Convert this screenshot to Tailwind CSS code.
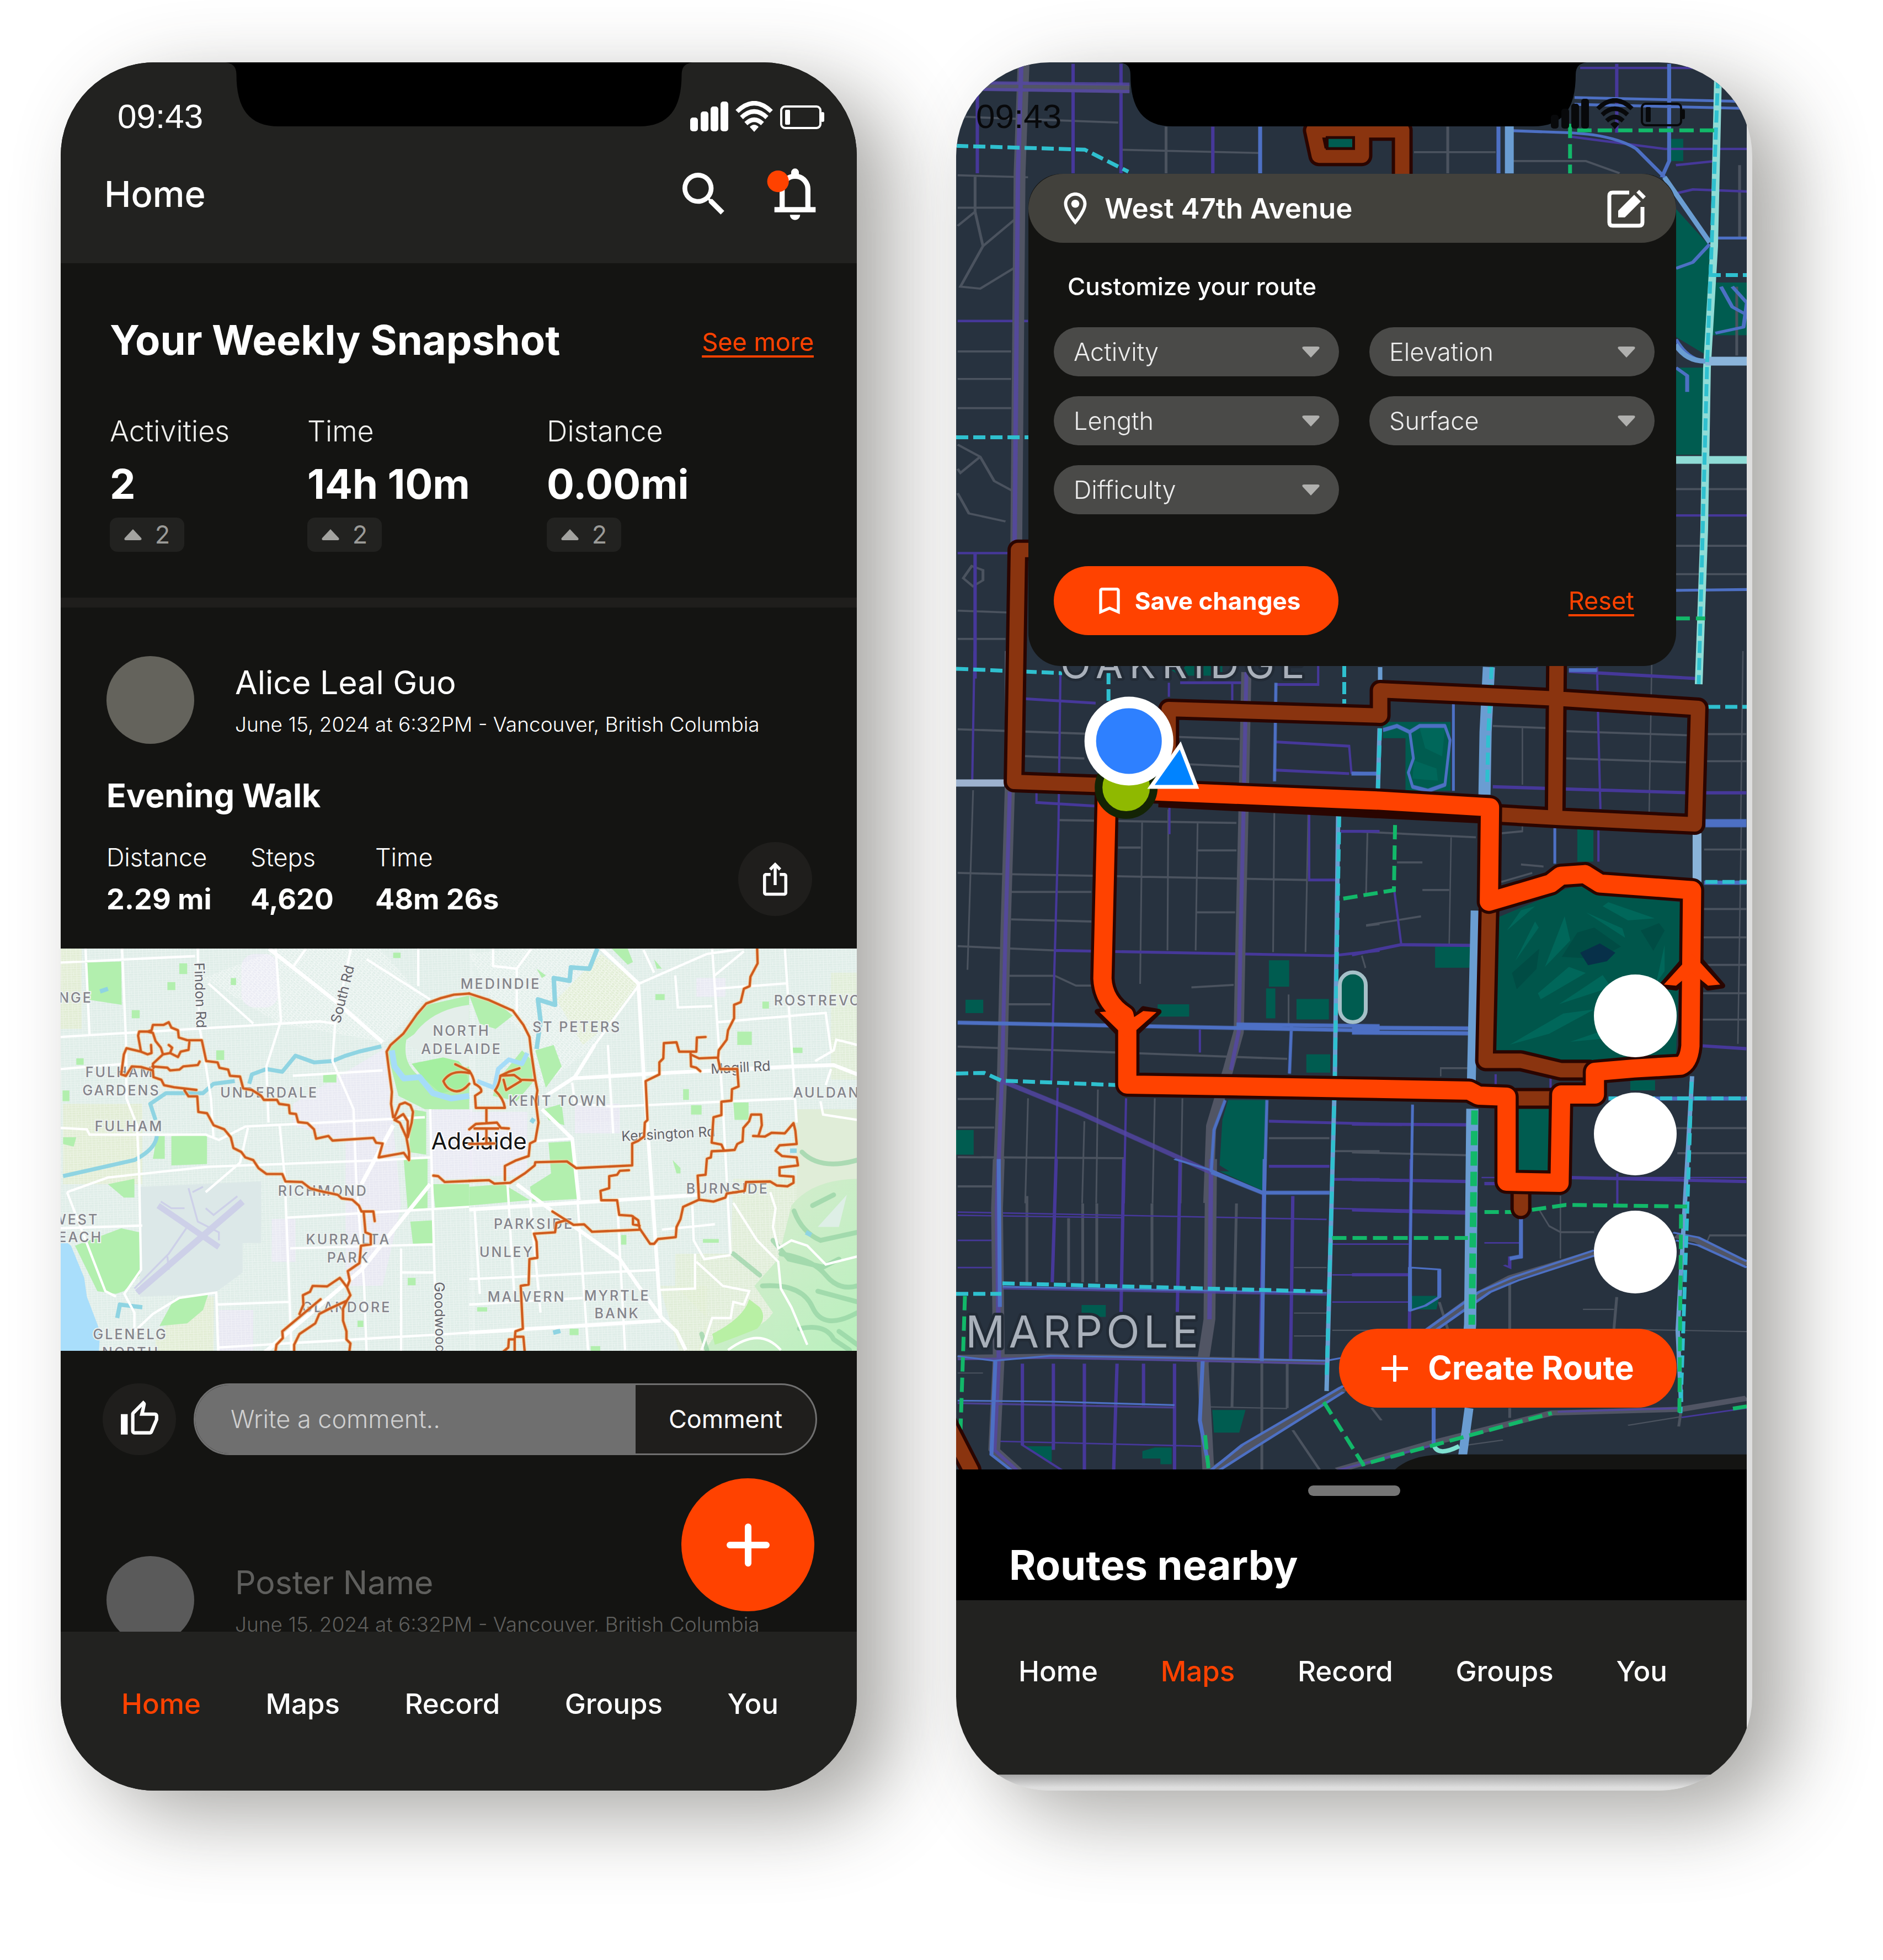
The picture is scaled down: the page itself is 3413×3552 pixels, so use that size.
<!DOCTYPE html>
<html lang="en">
<head>
<meta charset="utf-8">
<title>Activity tracker – Home and Maps</title>
<script src="https://cdn.jsdelivr.net/npm/@tailwindcss/browser@4"></script>
</head>
<body class="bg-white font-['Inter',sans-serif] text-white antialiased">
<svg class="absolute h-0 w-0" aria-hidden="true">
  <defs>
    <symbol id="status" viewBox="0 0 243 56">
      <g fill="currentColor">
        <rect x="0" y="30" width="14" height="25" rx="5"/><rect x="19" y="19" width="14" height="36" rx="5"/>
        <rect x="37" y="10" width="14" height="45" rx="5"/><rect x="55" y="1" width="14" height="54" rx="5"/>
        <path d="M116 56l-8-9q8-8 16 0z"/>
        <rect x="237" y="20" width="6" height="18" rx="3"/><rect x="172" y="16" width="9" height="27" rx="2"/>
      </g>
      <g fill="none" stroke="currentColor">
        <path stroke-width="8" d="M101 41q15-14 30 0M93 30q23-22 46 0M85 19q31-30 62 0"/>
        <rect x="165" y="10" width="71" height="39" rx="7" stroke-width="4"/>
      </g>
    </symbol>
    <symbol id="notch" viewBox="0 0 847 116">
      <path d="M0 0H847Q827 2 827 22C827 84 804 116 750 116H97C43 116 20 84 20 22Q20 2 0 0z" fill="#000"/>
    </symbol>
    <symbol id="up" viewBox="0 0 32 22"><path d="M16 1L31 17q2 4-3 4H4q-5 0-3-4z" fill="#a3a3a0"/></symbol>
    <symbol id="down" viewBox="0 0 32 22"><path d="M16 21L31 5q2-4-3-4H4q-5 0-3 4z" fill="#b0b0ae"/></symbol>
    <pattern id="blocks" width="36" height="26" patternUnits="userSpaceOnUse" patternTransform="rotate(-2)">
      <path d="M0 4H36M0 13H36M0 22H36M5 0V26M20 0V26M29 0V13" stroke="#fff" stroke-width="2" opacity=".42"/>
    </pattern>
    <pattern id="blocksTilt" width="30" height="26" patternUnits="userSpaceOnUse" patternTransform="rotate(38)">
      <path d="M0 4H30M0 13H30M0 22H30M5 0V26M20 0V26" stroke="#fff" stroke-width="2" opacity=".6"/>
    </pattern>
    <linearGradient id="hills" x1="0" y1="0" x2="1" y2="1"><stop offset="0" stop-color="#dcebd2"/><stop offset="1" stop-color="#b9f0bd"/></linearGradient>
    <path id="alternatives" d="M1890 997H1845L1838 1417L2006 1423M2118 1400V1285L2501 1297V1251L2820 1266L3077 1283L3071 1494L2820 1482L2715 1476M2821 1150L2818 1481M2698 1650L2692 1922H2756L2828 1939H2880M2748 1990H2812M2756 2160V2190M2380 237L2390 283H2468V238M2380 237H2541V330M1715 2575L1760 2663"/>
    <path id="planned" d="M2041 1432L2500 1451L2700 1463L2698 1634L2810 1601L2828 1587L2872 1584L2899 1601L3066 1613L3063 1895Q3060 1925 3045 1931L2960 1936L2890 1942V1983H2829L2826 2143L2730 2141V1987L2679 1985L2662 1976L2450 1972L2043 1965V1862L2038 1840Q2000 1815 1998 1773L2006 1435"/>
    <path id="track-west" d="M372 486L370 470L408 435L400 410L380 385L370 355L350 350L318 350L314 365L325 425L350 435L365 430L363 400M350 350L365 345L370 325L410 325L430 315L440 335L465 345L468 372L500 382L555 382L572 460L615 465L622 485L655 492L662 515L700 518L712 562L745 568L780 590L790 605L840 605L848 620L885 625L888 655L912 658L920 688L955 692L980 715L988 750L1035 740L1050 757L1205 747L1215 765L1240 768L1225 820L1320 803L1340 830L1340 800L1330 745L1305 690L1285 680L1318 658L1335 685L1335 745L1350 690L1355 650L1345 625L1325 615L1305 622L1285 670M325 425L270 412L260 435L250 510L268 515L290 480L325 482L370 495L372 520L402 530L412 550L450 558L535 568M490 570L505 592L538 592L542 650L575 655L600 700L640 715L665 745L675 785L705 800L720 820L750 830L770 860L800 882L860 882L872 910L935 912L965 935L1000 945L1070 960L1085 973L1125 978L1150 1000L1160 1022L1205 1022L1210 1058M1168 1022L1175 1100L1195 1108L1195 1145L1158 1150L1152 1215L1108 1245L1115 1280L1105 1305L1118 1335L1105 1355L1040 1385L1000 1405L985 1440L925 1480L905 1520V1560M1105 1305L1078 1270L1030 1302L975 1300L965 1322L938 1335L940 1370L925 1405M1005 1350L860 1470L862 1495L838 1520L832 1560M1105 1355L1090 1385L1090 1430L1103 1470L1103 1500L1118 1515L1112 1560M368 480L425 485L435 495L470 492L485 480L540 475L547 462M408 435L435 430L465 445L475 425L505 418L508 390M435 430L443 410L430 400M1568 208L1510 212L1460 225L1405 245L1370 285L1318 358L1270 400L1255 425L1265 500L1275 575L1272 620L1280 670M1515 472L1568 497M1568 505Q1530 496 1500 508Q1480 518 1470 535Q1480 560 1500 568Q1535 585 1568 545M1432 888L1450 890L1475 912L1568 908"/>
    <path id="track-east" d="M0 208L75 232L165 272L205 325L228 370L235 430L250 530L258 570L252 610L262 690L250 758L230 768L225 815L175 832L135 852L135 905M0 908L75 905L95 918L155 915L210 880L248 850L250 838L370 835L405 860L617 850L617 768L640 758L662 742L665 690L675 680L668 535L720 510L720 465L735 450L737 393L785 390L795 425L860 425L862 372L895 370M838 425L840 480L860 485L875 498M838 435L870 450L942 447M1090 30L1092 95L1065 145L1062 180L1040 190L1028 240L1003 250L1003 300L980 345L975 380L945 420L942 450L950 490L1015 490L1020 555L995 565L993 608L955 612L955 662L925 670L918 765L955 772L965 795L1005 792L1015 770L1035 760L1038 710L1060 685L1068 660L1105 660L1108 700L1095 740M1075 740L1120 742L1145 728L1195 730L1228 692L1235 720L1240 770L1175 775L1160 795L1185 815L1240 820L1245 850L1175 858L1175 888L1228 892L1228 915L1205 928L1165 925L1140 910L1048 912L1043 945L975 955L970 970L925 985L870 978L865 888L895 885L900 825L915 820L918 797L965 795M870 978L810 1005L800 1050L785 1080L782 1118L715 1125L700 1143L685 1143L645 1085L640 1055L615 1038L568 1035L560 980L500 980L497 945L530 935L530 890L560 885L570 870L605 868M620 1040V1070L645 1075M645 1090L465 1098L435 1070L395 1072L315 1022M365 1055L330 1065L325 1100L245 1105L255 1135L258 1195L228 1200L225 1295L195 1300L203 1460L175 1470L172 1500L150 1500L148 1530L130 1545M175 1490L205 1490L210 1545M172 1500V1545M0 497Q15 515 20 545Q50 560 45 575L22 590L25 635L135 635Q130 600 98 570Q115 545 118 515L150 500L190 487M118 515L170 512L195 530L250 532M195 535L140 568L130 530M65 635V690M0 715L25 695L105 690L120 710L150 712M0 770L95 768M20 712L110 712M65 712V770"/>
  </defs>
</svg>

<div class="grid grid-cols-2 items-start gap-[180px] pt-[113px] pr-[237px] pb-[306px] pl-[110px]">

  <!-- Home screen -->
  <section class="relative min-w-0 overflow-hidden rounded-[170px] bg-[#141412] shadow-[65px_45px_145px_rgba(60,57,50,0.44)]">
    <svg class="absolute top-0 left-1/2 h-[116px] w-[847px] -translate-x-1/2"><use href="#notch"/></svg>
    <header class="bg-[#222220] pt-[65px] pb-[75px]">
      <div class="flex h-[66px] items-center justify-between pr-[59px] pl-[103px]">
        <span class="font-['Liberation_Sans',sans-serif] text-[62px] leading-[66px]">09:43</span>
        <svg class="h-[56px] w-[243px]"><use href="#status"/></svg>
      </div>
      <div class="mt-[58px] flex h-[100px] items-center justify-between pr-[56px] pl-[79px]">
        <h1 class="text-[65px] leading-[80px] font-medium">Home</h1>
        <div class="flex items-center gap-[57px]">
          <button aria-label="Search"><svg class="block h-[104px] w-[104px]" viewBox="0 0 24 24" fill="#fff"><path d="M15.5 14h-.79l-.28-.27A6.47 6.47 0 0 0 16 9.500A6.500 6.500 0 1 0 9.500 16c1.610 0 3.090-.59 4.230-1.570l.27.28v.79l5 4.990L20.490 19l-4.990-5zm-6 0C7.010 14 5 11.990 5 9.500S7.010 5 9.500 5 14 7.010 14 9.500 11.990 14 9.500 14z"/></svg></button>
          <button aria-label="Notifications"><svg class="block h-[112px] w-[112px]" viewBox="0 0 24 24" fill="#fff"><path d="M4 19v-2h2v-7q0-2.075 1.250-3.687T10.500 4.200v-.7q0-.625.438-1.062T12 2t1.063.438T13.500 3.500v.7q2 .5 3.250 2.113T18 10v7h2v2H4Zm8 3q-.825 0-1.412-.587T10 20h4q0 .825-.587 1.413T12 22ZM8 17h8v-7q0-1.650-1.175-2.825T12 6T9.175 7.175T8 10v7Z"/><circle cx="5.400" cy="7" r="4.200" fill="#ff4200"/></svg></button>
        </div>
      </div>
    </header>

    <section class="border-b-[18px] border-[#1f1e1c] pt-[95px] pr-[78px] pb-[83px] pl-[89px]">
      <div class="flex items-center justify-between">
        <h2 class="text-[74px] leading-[88px] font-bold">Your Weekly Snapshot</h2>
        <a href="#" class="pt-[8px] text-[45px] leading-[56px] text-[#ff4200] underline decoration-4 underline-offset-[8px]">See more</a>
      </div>
      <div class="mt-[90px] grid grid-cols-[358px_434px_auto] justify-start">
        <div>
          <p class="text-[52px] leading-[64px] font-light text-[#f0f0ee]">Activities</p>
          <p class="mt-[19px] text-[74px] leading-[88px] font-bold">2</p>
          <p class="mt-[17px] flex h-[62px] w-[135px] items-center justify-center gap-[24px] rounded-[14px] bg-[#222220] text-[45px] text-[#9b9b98]"><svg class="h-[22px] w-[32px]"><use href="#up"/></svg>2</p>
        </div>
        <div>
          <p class="text-[52px] leading-[64px] font-light text-[#f0f0ee]">Time</p>
          <p class="mt-[19px] text-[74px] leading-[88px] font-bold">14h 10m</p>
          <p class="mt-[17px] flex h-[62px] w-[135px] items-center justify-center gap-[24px] rounded-[14px] bg-[#222220] text-[45px] text-[#9b9b98]"><svg class="h-[22px] w-[32px]"><use href="#up"/></svg>2</p>
        </div>
        <div>
          <p class="text-[52px] leading-[64px] font-light text-[#f0f0ee]">Distance</p>
          <p class="mt-[19px] text-[74px] leading-[88px] font-bold">0.00mi</p>
          <p class="mt-[17px] flex h-[62px] w-[135px] items-center justify-center gap-[24px] rounded-[14px] bg-[#222220] text-[45px] text-[#9b9b98]"><svg class="h-[22px] w-[32px]"><use href="#up"/></svg>2</p>
        </div>
      </div>
    </section>

    <article>
      <div class="pt-[88px] pr-[81px] pb-[59px] pl-[83px]">
        <div class="flex gap-[74px]">
          <div class="h-[159px] w-[159px] shrink-0 rounded-full bg-[#64635c]"></div>
          <div class="flex flex-col gap-[16px] pt-[12px]">
            <h3 class="text-[59px] leading-[72px]">Alice Leal Guo</h3>
            <p class="text-[37px] leading-[48px] font-light whitespace-nowrap">June 15, 2024 at 6:32PM - Vancouver, British Columbia</p>
          </div>
        </div>
        <h3 class="mt-[58px] text-[59px] leading-[72px] font-bold">Evening Walk</h3>
        <div class="mt-[48px] flex items-center justify-between">
          <div class="grid grid-cols-[261px_226px_auto]">
            <div><p class="text-[45px] leading-[56px] font-light">Distance</p><p class="mt-[18px] text-[52px] leading-[60px] font-bold">2.29 mi</p></div>
            <div><p class="text-[45px] leading-[56px] font-light">Steps</p><p class="mt-[18px] text-[52px] leading-[60px] font-bold">4,620</p></div>
            <div><p class="text-[45px] leading-[56px] font-light">Time</p><p class="mt-[18px] text-[52px] leading-[60px] font-bold">48m 26s</p></div>
          </div>
          <button aria-label="Share" class="flex h-[134px] w-[134px] items-center justify-center rounded-full bg-[#1f1e1c]"><svg class="h-[66px] w-[66px]" viewBox="0 0 24 24" fill="#fff"><path d="M16 5l-1.420 1.420-1.590-1.590V16h-1.980V4.830L9.420 6.420 8 5l4-4 4 4zm4 5v11c0 1.100-.9 2-2 2H6c-1.110 0-2-.9-2-2V10c0-1.110.89-2 2-2h3v2H6v11h12V10h-3V8h3c1.100 0 2 .89 2 2z"/></svg></button>
        </div>
      </div>

      <svg class="block h-[729px] w-full" viewBox="110 1719 1442 729" preserveAspectRatio="xMidYMid slice" role="img" aria-label="Map of Adelaide with the recorded walk">
        <rect x="100" y="1700" width="1470" height="760" fill="#dfede8"/>
        <!-- western half: ground, parks, water, main roads -->
        <g transform="translate(100 1700) scale(.4783 .4847)">
          <g fill="#ebe8f5" opacity=".8"><rect x="705" y="60" width="140" height="200" rx="50"/><path d="M900 620L1270 400L1280 700L1310 1000L1240 1300H1100V760L900 700z"/><rect x="1420" y="640" width="160" height="260"/><rect x="620" y="1390" width="130" height="160"/><rect x="820" y="1050" width="90" height="160"/></g>
          <g fill="#e2ecd0" opacity=".8"><rect x="20" y="40" width="80" height="300"/><rect x="30" y="620" width="300" height="300"/><path d="M380 1480L560 1340H600V1560H380z"/></g>
          <rect x="0" y="0" width="1590" height="1590" fill="url(#blocks)"/>
          <path d="M560 150L850 40H1230L1400 230L1250 390L850 320z" fill="url(#blocksTilt)"/>
          <path d="M320 930L780 910V1140H710V1250L600 1330L320 1340z" fill="#dce8e8"/>
          <g fill="#b2efae"><path d="M118 92L250 88L252 250L120 230z"/><path d="M440 740L575 735V845L440 850z"/><path d="M385 740H415V825H370z"/><path d="M75 1150L250 1085L320 1100V1260L260 1320L230 1330L160 1320z"/><path d="M395 1450L450 1350L580 1330L560 1390L500 1440z"/><path d="M200 920L300 900V970H260z"/><path d="M1320 830L1410 820V1010L1335 1015z"/><path d="M1430 920H1568V1010L1440 1015z"/><path d="M1345 1060L1430 1055L1433 1140L1355 1145z"/><path d="M1255 420L1320 350L1410 250L1568 215V330L1480 300Q1400 330 1330 380Q1310 480 1400 530L1568 480V640L1400 640L1300 590z"/><path d="M1350 640L1405 650V810L1340 800z"/><rect x="470" y="95" width="30" height="40"/><rect x="425" y="165" width="30" height="30"/><rect x="290" y="270" width="30" height="30"/><rect x="610" y="420" width="30" height="36"/><rect x="80" y="450" width="28" height="24"/><rect x="28" y="570" width="26" height="40"/><rect x="1015" y="510" width="50" height="30"/><rect x="1335" y="1270" width="30" height="28"/><rect x="1145" y="1430" width="22" height="24"/><rect x="665" y="150" width="20" height="26"/><rect x="1280" y="55" width="28" height="20"/><path d="M30 745H80L70 780L30 770z"/></g>
          <path d="M1350 470L1500 440Q1560 470 1568 560L1460 580L1390 520z" fill="#a4efa0"/>
          <path d="M1335 400Q1400 270 1568 250V470L1400 430z" fill="#e4eeea"/>
          <path d="M20 1120L60 1150L110 1270L120 1340L170 1470L165 1560H20z" fill="#a9defb"/>
          <g fill="none" stroke="#8fd4e2" stroke-linejoin="round"><path d="M30 890L300 830Q380 790 385 740M380 680L360 620L420 580L560 580L600 545L680 535M735 545L745 510L800 490L860 500L910 440L980 465L1050 460L1100 440L1150 425L1235 405" stroke-width="15"/><path d="M1275 420L1285 480L1320 525L1380 520L1430 580L1500 600L1568 590" stroke="#a5dcf8" stroke-width="22"/><path d="M235 1420L245 1370L330 1380M170 200L200 190" stroke-width="16"/></g>
          <g fill="none" stroke="#fff" stroke-width="9"><path d="M20 92L530 68M253 40L268 380L270 600L310 700L318 880L325 1240L262 1330L300 1400V1470L370 1405L470 1345L610 1325L618 1560M115 40L130 360M20 370L1000 312L1060 320M20 490L270 470M540 40L545 320L590 600L600 750M835 40L855 310L800 480L808 690M20 710L120 715L130 735L570 735L620 755L720 705L1400 670M850 700L870 900L895 1540M45 950L200 895L580 855L1240 830L1420 820M570 950L700 840L730 710M580 170L750 320M20 1085L330 1075M610 1370L885 1360M880 1045L1568 1005M1420 640L1430 1010L1445 1560M1060 320L1050 460L1130 640L1140 900L1170 1300L1180 1560M900 515L1240 495M1310 1160V1560M620 1530L1568 1475M1120 40L1060 320M1375 40V180M45 950L190 1320L230 1340M1310 1250H1440M890 1160L1430 1145M950 40L900 110M1180 80L1420 230"/><path d="M810 40L1060 235L1240 390M1280 700L1160 920M1420 920L1160 1240L780 1560" stroke-width="15"/></g>
          <g fill="none" stroke="#cdd0e8"><path d="M310 1325L710 985" stroke-width="24"/><path d="M390 1000L620 1155" stroke-width="22"/><path d="M570 1010L600 1035L690 965M505 935L540 1060L620 1100V1130M425 1190L430 1240M500 1080L430 1180L300 1310M520 950L560 930M400 985L440 1010L490 1010" stroke-width="7"/></g>
        </g>
        <!-- eastern half -->
        <g transform="translate(850 1700) scale(.4783 .4847)">
          <g fill="#ebe8f5" opacity=".8"><rect x="400" y="620" width="170" height="110"/><rect x="0" y="650" width="220" height="240"/><rect x="860" y="150" width="110" height="70"/></g>
          <g fill="#dfecd2"><path d="M330 230L500 60L640 170L520 330L430 400z"/><path d="M1240 640H1480V1560H860L900 1420L780 1300V1180L990 1180L1000 900H1240z" opacity=".7"/><path d="M720 1300H900V1560H800z" opacity=".7"/><rect x="1370" y="130" width="110" height="400" opacity=".7"/></g>
          <rect x="0" y="0" width="1240" height="1590" fill="url(#blocks)"/><rect x="1240" y="0" width="250" height="640" fill="url(#blocks)"/>
          <path d="M0 60L180 40H480L640 180L480 400L270 560L230 380L100 260z" fill="url(#blocksTilt)"/>
          <path d="M1220 1000Q1300 900 1480 900V1560H880L940 1470Q1100 1480 1150 1400L1080 1300L1170 1200z" fill="url(#hills)"/>
          <g fill="none" stroke="#8fcfa0" stroke-width="18" opacity=".65" stroke-linecap="round"><path d="M1260 800Q1330 870 1470 830M1230 1020Q1260 1100 1330 1130L1470 1100M1180 1180Q1300 1200 1350 1260T1470 1300M1110 1300Q1260 1290 1300 1380T1470 1400M1250 1460Q1350 1440 1380 1500L1440 1540M1000 1180L1100 1260M1300 1000L1380 960M880 1480L900 1540M1150 1130L1210 1200L1340 1230L1400 1200M1320 1320L1470 1360M1400 1470L1470 1520"/></g>
          <path d="M920 1480Q1040 1420 1060 1350L1100 1380Q1130 1420 1090 1460Q990 1500 930 1520z" fill="#b8f0a4"/>
          <path d="M1320 1080L1430 960L1400 1080z" fill="#deefe6"/>
          <g fill="#b2efae"><path d="M0 215L110 245L165 290L100 340L40 320z"/><path d="M100 540L200 420L240 460V540L180 610L90 590z"/><path d="M250 420L320 400L350 480L290 560z"/><path d="M280 640L350 620L360 700L300 680z"/><path d="M300 765L395 760L410 975L240 985L230 930L310 880z"/><path d="M0 930L130 920L230 980L0 1000z"/><path d="M540 40H600L620 90L600 100z"/><path d="M1000 615H1058V680H1005z"/><path d="M1015 350H1070V400H1015z"/><path d="M840 625H880V660H840z"/><path d="M1225 410H1262V430H1225z"/><rect x="705" y="210" width="35" height="22"/><rect x="1110" y="238" width="25" height="26"/><rect x="810" y="565" width="22" height="40"/><path d="M770 830L800 860V880H785z"/><rect x="380" y="1460" width="34" height="24"/><rect x="30" y="1380" width="38" height="16"/><rect x="460" y="1525" width="36" height="20"/><path d="M255 115L290 140L275 150z"/><path d="M700 80L730 115L710 115z"/><rect x="885" y="1125" width="60" height="14"/><rect x="575" y="1110" width="20" height="36"/></g>
          <g fill="none" stroke="#8fd4e2" stroke-width="17" stroke-linejoin="round"><path d="M485 40L455 115L385 110L380 160L320 150L325 250L260 230L270 310L255 415"/><path d="M220 430L200 470L150 455L110 490L95 560L30 535" stroke="#a5dcf8"/><path d="M1215 795H1240M1275 1100L1295 1110M318 1475L345 1468M235 690L245 675" /></g>
          <g fill="none" stroke="#fff" stroke-width="9"><path d="M90 40V105L180 115L180 280M180 115L235 40M645 170L900 60L1040 40M640 180L475 400M920 40L960 620L990 1180M930 190L1200 170M1195 40L1240 690M940 315L1350 280L1370 420M660 45L700 130M1040 50L930 140M525 400L545 730M390 540L400 620L545 630L1230 600M0 1275L720 1240M855 1180V1310L720 1315M20 1010L40 1330M145 920L170 1330M230 980L270 1400M410 980L450 1540M560 980L590 1540M0 1370L430 1345M845 1000L850 1130L890 1200L990 1185M240 760L390 750M730 1090L930 1070M860 1210L960 1300L1060 1320L1040 1370L1000 1360L990 1420L920 1420L880 1540M1140 950L1160 1010L1150 1080L1170 1160L1220 1130L1280 1150L1350 1220L1470 1190M1000 990L1090 1130L1170 1210L1180 1310L1220 1380L1280 1520M980 1540Q1100 1450 1180 1540M1330 610L1340 660L1470 680M1310 460L1380 420L1390 380L1470 400M1370 490L1350 550M780 140L790 260L920 255"/><path d="M500 40L640 170L660 500L700 1060L725 1420M390 525L640 510L1230 480L1380 475L1470 510M275 600L400 520L475 400M275 640L390 750L415 980M0 1015L870 960M180 920L300 1010L570 1200L640 1300L730 1420L785 1470L820 1540M0 1475L725 1430" stroke-width="14"/></g>
        </g>
        <!-- place names -->
        <g font-family="Inter, sans-serif" font-size="25" font-weight="500" letter-spacing="3" fill="#84848b" stroke="#eef3f2" stroke-width="4" paint-order="stroke" text-anchor="middle">
          <text x="137" y="1817">NGE</text><text x="217" y="1952">FULHAM</text><text x="220" y="1985">GARDENS</text><text x="488" y="1989">UNDERDALE</text><text x="234" y="2050">FULHAM</text><text x="585" y="2167">RICHMOND</text><text x="137" y="2219">WEST</text><text x="136" y="2251">BEACH</text><text x="631" y="2255">KURRALTA</text><text x="631" y="2288">PARK</text><text x="628" y="2378">GLANDORE</text><text x="236" y="2427">GLENELG</text><text x="237" y="2460">NORTH</text><text x="836" y="1877">NORTH</text><text x="836" y="1910">ADELAIDE</text><text x="907" y="1792">MEDINDIE</text><text x="1045" y="1870">ST PETERS</text><text x="1491" y="1822">ROSTREVOR</text><text x="1508" y="1989">AULDANA</text><text x="1011" y="2004">KENT TOWN</text><text x="1318" y="2163">BURNSIDE</text><text x="967" y="2227">PARKSIDE</text><text x="918" y="2278">UNLEY</text><text x="954" y="2359">MALVERN</text><text x="1118" y="2357">MYRTLE</text><text x="1118" y="2389">BANK</text>
        </g>
        <g font-family="Inter, sans-serif" font-size="25" fill="#63636a" stroke="#eef3f2" stroke-width="4" paint-order="stroke">
          <text transform="translate(352 1745) rotate(88)">Findon Rd</text><text transform="translate(616 1856) rotate(-76)">South Rd</text><text transform="translate(787 2323) rotate(89)">Goodwood Rd</text><text transform="translate(1288 1946) rotate(-3)">Magill Rd</text><text transform="translate(1126 2068) rotate(-3)">Kensington Rd</text>
        </g>
        <text x="781" y="2083" font-family="Inter, sans-serif" font-size="42" fill="#141414" stroke="#fff" stroke-width="4" paint-order="stroke">Adelaide</text>
        <!-- recorded track -->
        <g fill="none" stroke-linejoin="round" stroke-linecap="round">
          <g stroke="#f8dcae" stroke-width="15" opacity=".7"><use href="#track-west" transform="translate(100 1700) scale(.4783 .4847)"/><use href="#track-east" transform="translate(850 1700) scale(.4783 .4847)"/></g>
          <g stroke="#cf5a1c" stroke-width="9"><use href="#track-west" transform="translate(100 1700) scale(.4783 .4847)"/><use href="#track-east" transform="translate(850 1700) scale(.4783 .4847)"/></g>
        </g>
      </svg>

      <form class="mt-[59px] flex h-[130px] gap-[32px] pr-[72px] pl-[76px]">
        <button type="button" aria-label="Like" class="flex w-[133px] shrink-0 items-center justify-center rounded-full bg-[#1f1e1c]"><svg class="h-[74px] w-[74px]" viewBox="0 0 24 24" fill="#fff"><path d="M9 21h9c.83 0 1.540-.5 1.840-1.220l3.020-7.050c.09-.23.14-.47.14-.73v-2c0-1.100-.9-2-2-2h-6.310l.95-4.570.03-.32c0-.41-.17-.79-.44-1.060L14.170 1 7.580 7.590C7.220 7.950 7 8.450 7 9v10c0 1.100.9 2 2 2zM9 9l4.340-4.340L12 10h9v2l-3 7H9V9zM1 9h4v12H1z"/></svg></button>
        <div class="flex min-w-0 flex-1 overflow-hidden rounded-full border-3 border-[#707070] bg-[#1f1e1c]">
          <input type="text" aria-label="Write a comment" placeholder="Write a comment.." class="min-w-0 flex-1 bg-[#6f6f6f] pl-[64px] text-[45px] font-light outline-none placeholder:text-[#cfcfcf]">
          <button type="button" class="w-[326px] text-[45px]">Comment</button>
        </div>
      </form>
    </article>

    <article class="relative h-[320px] overflow-hidden pt-[183px] pl-[83px]">
      <div class="flex gap-[74px]">
        <div class="h-[159px] w-[159px] shrink-0 rounded-full bg-[#5a5a5a]"></div>
        <div class="flex flex-col gap-[16px] pt-[12px]">
          <h3 class="text-[59px] leading-[72px] text-[#5f5f5d]">Poster Name</h3>
          <p class="text-[37px] leading-[48px] font-light whitespace-nowrap text-[#5f5f5d]">June 15, 2024 at 6:32PM - Vancouver, British Columbia</p>
        </div>
      </div>
      <button aria-label="New activity" class="absolute top-[42px] right-[77px] flex h-[241px] w-[241px] items-center justify-center rounded-full bg-[#ff4200]"><svg class="h-[78px] w-[78px]" viewBox="0 0 78 78"><path d="M39 6V72M6 39H72" stroke="#fff" stroke-width="12" stroke-linecap="round"/></svg></button>
    </article>

    <nav class="flex h-[288px] justify-between bg-[#222220] pt-[99px] pr-[142px] pl-[110px] text-[51px] leading-[64px] font-medium">
      <a href="#" class="text-[#ff4200]">Home</a><a href="#">Maps</a><a href="#">Record</a><a href="#">Groups</a><a href="#">You</a>
    </nav>
  </section>

  <!-- Maps screen -->
  <section class="relative min-w-0 overflow-hidden rounded-[170px] bg-[#dedede] pr-[10px] shadow-[65px_45px_145px_rgba(60,57,50,0.44)]">
    <div class="relative h-[2550px] overflow-hidden">
      <svg class="absolute inset-0 h-full w-full" viewBox="1733 113 1432 2550" preserveAspectRatio="xMidYMid slice" role="img" aria-label="Map of Vancouver with the planned route">
        <rect x="1700" y="80" width="1500" height="2620" fill="#27323f"/>
        <!-- parks -->
        <g fill="#005c50">
          <g transform="translate(1700 80) scale(1.0204 .7334)"><path d="M1305 400L1370 500L1380 590H1436V720H1365V770L1305 720z"/><rect x="1305" y="800" width="58" height="215"/><rect x="1298" y="235" width="25" height="55"/></g>
          <g transform="translate(1700 1180) scale(.5102 .6378)"><rect x="98" y="990" width="63" height="38"/><rect x="780" y="1003" width="112" height="35"/><rect x="1175" y="878" width="72" height="75"/><rect x="1165" y="958" width="33" height="85"/><rect x="1273" y="988" width="115" height="58"/><rect x="1308" y="1145" width="85" height="52"/><rect x="60" y="1360" width="67" height="70"/><path d="M1030 1275H1165L1158 1530L1080 1500L1000 1460L1010 1330z"/><path d="M780 30H1010V70H860z"/></g>
          <g transform="translate(2450 1180) scale(.5102 .7334)"><path d="M110 175H350V345H190V215H110z"/><rect x="800" y="435" width="57" height="85"/><rect x="295" y="730" width="127" height="52"/><rect x="590" y="1130" width="110" height="155"/><rect x="988" y="1060" width="88" height="25"/>
            <path d="M510 660L750 590L820 575L870 600L1170 620L1150 1010L740 1020L600 990L500 1000z" fill="#00564b"/>
            <g fill="#00675a"><path d="M550 690L650 630L600 640zM580 765L650 668L663 683zM685 780L755 655L775 715zM660 845L770 780L830 795L670 860zM735 872L890 800L920 830zM560 972L750 895L860 885L700 945zM890 630L910 620L1075 660L980 665zM830 645L960 685L970 708zM775 965L900 935L1000 950zM1080 820L1110 725V790z"/><path d="M240 190H330L320 260L260 240zM220 270L300 290L305 320L215 315z"/></g>
            <g fill="#004c44"><path d="M745 755L800 695L860 683L955 730L870 760zM568 795L665 735L655 785L585 835zM1025 690L1090 672L1110 690L1070 740z"/></g><path d="M810 745L880 722L935 745L905 766L838 776z" fill="#073049"/></g>
          <g transform="translate(1700 2100) scale(1.0204 .4464)"><path d="M500 50H578V130z"/><path d="M255 592H298V640H255z"/><path d="M487 1018H546L535 1110H490z"/><path d="M155 1165H202V1230z"/><path d="M363 1185L385 1170H415V1238H395V1215H363z"/><path d="M838 555H890L885 610H838z"/></g>
        </g>
        <!-- minor streets -->
        <g fill="none" stroke="#4b535f" stroke-width="5">
          <path transform="translate(1700 80) scale(1.0204 .7334)" d="M35 325L160 330M35 405H140M66 325V415L80 500L140 430M35 450L66 415M80 500L40 600L75 605L140 550M35 760H130M35 828H130M35 900H130M35 990L75 1020L100 1080L140 1110M75 1020L40 1060L35 1050M35 1110L55 1160L120 1180M35 180L320 195M325 262L570 270M405 205V320M905 205V320M845 268H990M1020 290H1150L1210 320M1310 1100H1436M1310 1240H1436M1310 1310H1436M1423 300V480M1418 600V770M45 1320L60 1290L80 1300V1325L62 1340zM35 1400L130 1405M35 1470H120"/>
          <path transform="translate(1700 1180) scale(.5102 .6378)" stroke-width="6" d="M70 222L1070 250M300 298L520 305M850 320L1070 328M70 630L220 633L1310 650M260 684H545M260 762L545 768M640 558H720M430 480L1060 488M920 566H1060M915 742H1055M70 838L415 850M250 922H415L490 950H550M900 955L1050 948M250 1003H400M70 1123L1240 1158M70 1272H200M70 1353H200M70 1437L660 1440M70 1520H200M1175 1383H1390M1410 1420H1568M125 395L105 905M725 485L718 945M818 450L815 850M922 488L915 850M1195 400L1190 855M1315 460L1305 855M320 1270L310 1568M520 1335L512 1568M568 1245L562 1568M770 1270L762 1568M868 1270L862 1568M1245 975V1060M1525 510L1520 690M1520 780L1568 775M1505 865L1518 900"/>
          <path transform="translate(2450 1180) scale(.5102 .7334)" d="M0 445L440 460M500 185L690 190M760 198L1195 208M760 265L1195 275M1260 205H1400M1260 272H1400M605 190V330M1065 0L1055 400M1388 0L1380 430M55 450L50 600M352 460L345 725M160 522H250M250 590H345M50 677L245 655M1250 490H1400M1240 637H1400M1240 707H1400M1245 775H1400M1245 845H1400M1245 910H1400M1382 430L1370 970M0 1238L415 1245M1100 1178H1400M1155 1240H1400M315 1050V1030H420M740 1345V1500M600 527L680 532M530 570L640 548M530 450L605 445V430M665 1380L700 1420L740 1435H860M1260 1460L1270 1443H1400"/>
          <path transform="translate(1700 2100) scale(1.0204 .4464)" d="M158 150V500M257 180V500M282 180V500M232 240V500M380 180V500M530 180L522 1010M575 830V1262M620 830V1010M470 1005L620 1012M632 440H690M632 625H690M632 718H690M700 695H840M1205 560L1200 690L1436 700M1145 610H1200M630 1100L678 1262M35 868H80M1225 1080L1320 1045M925 1165L1003 1140M770 1010L787 1060M890 580L905 690M1015 500V690M1015 1010V1050M1320 1010L1315 1085"/>
        </g>
        <!-- quiet roads -->
        <g fill="none" stroke="#46389a" stroke-width="6">
          <path transform="translate(1700 80) scale(1.0204 .7334)" d="M70 90V320M240 50V320M325 50V320M35 685H160M35 1258H125M488 205V320M1140 60H1436M1205 50V220M1310 1165H1436M1310 300L1380 290M1310 370L1340 360L1436 365M1125 230L1290 260H1436M66 1260V1568"/>
          <path transform="translate(1700 1180) scale(.5102 .6378)" stroke-width="8" d="M130 0L122 365M435 60L428 500L410 1000L403 1220M300 135L560 148M415 850L1400 865L1568 850M668 1270L660 1568M425 1240L415 1568M1318 460V650H1410M820 90V130M822 430V520M1200 258L1460 270L1468 345L1568 350M1200 338L1460 348M1175 1335L1568 1343M1175 1463H1390M1400 1500H1568M1045 90V140M1200 95H1350V0M350 400V430L560 440M860 90H1090M930 1075V1140M1430 512H1568"/>
          <path transform="translate(2450 1180) scale(.5102 .7334)" stroke-width="8" d="M0 1168L415 1170M0 1305L415 1310M0 1380L415 1388M0 1540H200M770 50L1225 68M870 40L875 200L882 390M500 335L1195 350M1255 350H1400M150 590L175 725L440 727M0 750L175 725M1245 975L1400 982M770 1300L1400 1310M470 1315H520M510 1045V1075M705 1055V1085M942 1290V1370M360 130V345M875 440V520"/>
          <path transform="translate(1700 2100) scale(1.0204 .4464)" d="M35 215L690 245M35 228L330 238M210 0L203 500M330 0L325 620M430 0L425 620M578 140L572 820M630 150L626 820M700 80L760 88M700 200L940 212M700 345H840M700 470H835M700 580H835M840 0L837 690M35 330H100M35 440H100M110 1145L470 1165M150 830V1160L220 1262M205 830V1180M260 830V1262M318 830L312 1262M420 830V1262M365 830V1000M965 75H1436M970 340H1035M1015 395V440L1005 430M1320 1048L1436 1010"/>
        </g>
        <!-- arterials -->
        <g fill="none" stroke="#515564" stroke-width="21" stroke-linejoin="round">
          <path transform="translate(1700 80) scale(1.0204 .7334)" d="M35 104L340 112M152 50L145 320L137 1568"/>
          <path transform="translate(1700 1180) scale(.5102 .6378)" stroke-width="36" d="M255 0V400L240 800L228 1200L210 1568M1095 60L1085 450L1075 800L1068 1080L1030 1190L970 1350L960 1568"/>
          <path transform="translate(1700 2100) scale(1.0204 .4464)" d="M108 0L105 200L108 800L100 1180L140 1262M485 0L482 650L470 830L480 1262M35 805L200 800L400 808L690 825M490 1262L560 1150L720 930M870 700L960 550L1020 480L1165 380M1310 310L1350 330L1436 430M710 1262L880 1150L1090 1030L1320 1015L1436 970"/>
        </g>
        <g fill="none" stroke="#5546a8" stroke-width="8" stroke-linejoin="round" opacity=".8">
          <path transform="translate(1700 80) scale(1.0204 .7334)" d="M35 96L340 100M148 50L142 320L134 1568M35 112L340 118"/>
          <path transform="translate(1700 1180) scale(.5102 .6378)" stroke-width="14" d="M255 400L240 800L228 1200L210 1568M1095 60L1085 450L1075 800L1068 1080L1040 1190M225 1220L500 1310L970 1480"/>
          <path transform="translate(1700 2100) scale(1.0204 .4464)" d="M108 0L105 200L108 800L100 1180L140 1262M485 0L482 650M35 812L200 806L690 830M115 525L690 550M35 990L420 1008M710 1262L880 1160M1100 1025L1320 1010"/>
        </g>
        <g fill="none" stroke="#4d70c4" stroke-width="7" stroke-linejoin="round">
          <path transform="translate(1700 80) scale(1.0204 .7334)" d="M572 205V320M995 205V320M1130 133L1436 143M1130 150L1436 160M1298 50V290L1285 330M1120 220Q1200 225 1240 260L1290 330L1370 490M1020 215L1120 220M1380 480H1436M1370 495L1340 540L1310 555M1390 600L1410 650L1436 670M1380 715L1430 700L1436 640L1410 600M1310 800L1330 820V860M1310 730Q1330 780 1365 785M1310 1350L1436 1348"/>
          <path transform="translate(1700 1180) scale(.5102 .6378)" stroke-width="11" d="M1200 90L1195 370M70 1055L1568 1078M1060 1060L1568 1065M1255 1065L1248 1200M970 1480L1150 1538H1390M1168 1275L1158 1568M970 1480L980 1360L1020 1275M1468 348H1568"/>
          <path transform="translate(2450 1180) scale(.5102 .7334)" stroke-width="10" d="M720 435V525M0 930L430 932M0 942L430 944M1255 420H1400M1255 430H1400M1250 572H1400M215 1120L205 1568M600 1400L598 1495L560 1500M910 1105H1400M770 47H870M360 130V345M205 200L240 185H330L348 220L330 330L270 345L215 335L200 300L218 265zM110 195L160 185L205 200"/>
          <path transform="translate(1700 2100) scale(1.0204 .4464)" d="M420 0L485 45L578 135M580 0L575 820M35 980L200 984L420 998M115 518L690 543M838 440L890 448V560L865 595L838 615zM35 800L100 818L200 798L690 818L720 805M485 1262L540 1160L720 920M500 1262L570 1160L720 945M862 700L960 540L1020 480L1165 370M880 700L980 540L1030 492L1165 392M1305 298L1350 318L1436 415M1310 330L1350 350L1436 440M108 0L110 600M102 820L95 1200L130 1262M470 820L465 1060L480 1240M880 1010V1160M1035 240V400H1015"/>
        </g>
        <!-- popular corridors -->
        <g fill="none" stroke="#6a9dd2" stroke-linejoin="round">
          <path stroke-width="22" d="M2698 1209L2692 1327L2690 1440M2668 2009L2664 2400L2662 2420"/>
          <path stroke-width="16" d="M2673 1650L2666 1970M2735 225V315M2662 2551L2650 2640"/>
          <path stroke-width="14" stroke="#8fdcd6" d="M3113 139L3106 447L3093 667L3088 960L3078 1240M3036 834H3165"/>
          <path stroke-width="16" stroke="#8ab4da" d="M3075 1510V1600M3090 655H3165"/>
          <path stroke-width="9" d="M3016 322L3098 440M3036 625Q3055 655 3090 655"/>
          <path stroke-width="8" d="M2501 1209V1260M2500 1320L2497 1430M3066 1950L3040 2410L3046 2540M2425 1477L2419 1950L2413 2180L2404 2520"/>
          <path stroke-width="13" stroke="#9db2cf" d="M1733 1419H1820"/>
          <path stroke-width="8" stroke="#7fe0d0" d="M2598 2617Q2604 2640 2644 2620"/>
        </g>
        <g fill="none" stroke="#2fc0cf" stroke-width="7" stroke-dasharray="22 9">
          <path d="M2703 1209L2697 1327L2695 1420M3113 139L3093 667L3078 1240M3096 499H3165M1733 265L1966 272L2045 312M1733 793H1865M1733 1212L1925 1220M2009 1218V1270M2436 1205V1275M2501 1320L2497 1430M2427 1477L2419 1950L2413 2180L2404 2500M1733 1945L1784 1944L1815 1958L2027 1966M3095 1281H3165M3090 1598H3165M2915 1990H3165M3065 1960L3045 2560M1817 2325L2404 2340M1733 2344H1815"/>
        </g>
        <g fill="none" stroke="#12b869" stroke-width="7" stroke-dasharray="26 11">
          <path d="M2858 237H3110M2845 225V315M2528 1495L2526 1613L2430 1629M3036 1121H3090M2690 2196H2740M2776 2192L2838 2183L3057 2186M2414 2243H2660M2399 2540L2470 2653L2812 2560M1749 2348L1741 2590M3046 2200L3043 2560M2184 2600L2190 2660M3140 2552L3165 2548"/>
          <path stroke-width="12" d="M2672 2012L2667 2400"/>
        </g>
        <rect x="2428" y="1762" width="47" height="90" rx="23" fill="#005c50" stroke="#a5c0c8" stroke-width="7"/>
        <!-- districts -->
        <g font-family="Inter, sans-serif" fill="#a9b0ba" stroke="#222b36" stroke-width="10" stroke-linejoin="round" paint-order="stroke">
          <text x="1750" y="2441" font-size="79" letter-spacing="7">MARPOLE</text><text x="1922" y="1229" font-size="72" letter-spacing="11">OAKRIDGE</text>
        </g>
        <g fill="none" stroke-linejoin="round" stroke-linecap="round">
          <use href="#alternatives" stroke="#2a0500" stroke-width="38"/>
          <use href="#alternatives" stroke="#8a340f" stroke-width="26"/>
        </g>
        <rect x="2405" y="250" width="48" height="20" fill="#005c50" stroke="#2a0500" stroke-width="5"/>
        <!-- planned route -->
        <path d="M2100 1446L2700 1476" stroke="#2a0500" stroke-width="34"/>
        <path d="M1989 1833L2016 1828L2042 1860L2072 1828L2100 1833L2042 1888zM3011 1786L3037 1790L3066 1760L3095 1790L3121 1786L3066 1722z" fill="#ff4200" stroke="#2a0500" stroke-width="10" stroke-linejoin="round"/>
        <g fill="none" stroke-linejoin="round">
          <use href="#planned" stroke="#2a0500" stroke-width="44"/>
          <use href="#planned" stroke="#ff4200" stroke-width="33"/>
        </g>
        <path d="M1993 1834L2016 1832L2042 1852L2072 1832L2096 1834L2042 1882zM3015 1784L3037 1786L3066 1762L3095 1786L3117 1784L3066 1728z" fill="#ff4200"/>
        <circle cx="2041" cy="1427" r="50" fill="#8fb900" stroke="#142405" stroke-width="14"/>
        <path d="M2086 1426L2139 1351L2168 1426z" fill="#0083ff" stroke="#fff" stroke-width="7"/>
        <circle cx="2046" cy="1343" r="70" fill="#2e80ff" stroke="#fff" stroke-width="21"/>
        <path d="M2525 2665Q2555 2635 2620 2635H3170V2665z" fill="#141412"/>
      </svg>

      <svg class="absolute top-0 left-[296px] h-[116px] w-[847px]"><use href="#notch"/></svg>
      <div class="relative flex h-[202px] items-start justify-between pt-[65px] pr-[112px] pl-[36px] text-[#08090b]">
        <span class="font-['Liberation_Sans',sans-serif] text-[62px] leading-[66px]">09:43</span>
        <svg class="h-[56px] w-[243px]"><use href="#status"/></svg>
      </div>

      <form class="relative mr-[128px] ml-[131px] h-[892px] rounded-[60px] bg-[#141412]">
        <div class="flex h-[125px] items-center rounded-full bg-[#42413c] pr-[53px] pl-[50px]">
          <svg class="h-[70px] w-[70px]" viewBox="0 0 24 24" fill="#fff"><path d="M12 2C8.130 2 5 5.130 5 9c0 5.250 7 13 7 13s7-7.750 7-13c0-3.870-3.130-7-7-7zM7 9c0-2.760 2.240-5 5-5s5 2.240 5 5c0 2.880-2.880 7.190-5 9.880C9.920 16.210 7 11.850 7 9z"/><circle cx="12" cy="9" r="2.500"/></svg>
          <input type="text" aria-label="Street" value="West 47th Avenue" class="ml-[18px] min-w-0 flex-1 bg-transparent text-[51px] leading-[64px] font-semibold outline-none">
          <button type="button" aria-label="Edit route"><svg class="block h-[74px] w-[74px]" viewBox="0 0 74 74" fill="none" stroke="#fff" stroke-width="7"><path d="M42 8H12Q6 8 6 14V62Q6 68 12 68H60Q66 68 66 62V34"/><path d="M22 53V41L51 12L63 24L34 53z" fill="#fff" stroke="none"/><path d="M55 8L60 3L72 15L67 20z" fill="#fff" stroke="none"/></svg></button>
        </div>
        <p class="mt-[51px] pl-[71px] text-[44px] leading-[56px] font-medium">Customize your route</p>
        <div class="mt-[46px] grid grid-cols-2 gap-x-[55px] gap-y-[36px] pr-[39px] pl-[46px]">
          <div class="relative"><select aria-label="Activity" class="h-[89px] w-full appearance-none rounded-full bg-[#4a4a48] pl-[36px] text-[45px] font-light text-[#ededed]"><option>Activity</option></select><svg class="pointer-events-none absolute top-[34px] right-[35px] h-[22px] w-[32px]"><use href="#down"/></svg></div>
          <div class="relative"><select aria-label="Elevation" class="h-[89px] w-full appearance-none rounded-full bg-[#4a4a48] pl-[36px] text-[45px] font-light text-[#ededed]"><option>Elevation</option></select><svg class="pointer-events-none absolute top-[34px] right-[35px] h-[22px] w-[32px]"><use href="#down"/></svg></div>
          <div class="relative"><select aria-label="Length" class="h-[89px] w-full appearance-none rounded-full bg-[#4a4a48] pl-[36px] text-[45px] font-light text-[#ededed]"><option>Length</option></select><svg class="pointer-events-none absolute top-[34px] right-[35px] h-[22px] w-[32px]"><use href="#down"/></svg></div>
          <div class="relative"><select aria-label="Surface" class="h-[89px] w-full appearance-none rounded-full bg-[#4a4a48] pl-[36px] text-[45px] font-light text-[#ededed]"><option>Surface</option></select><svg class="pointer-events-none absolute top-[34px] right-[35px] h-[22px] w-[32px]"><use href="#down"/></svg></div>
          <div class="relative"><select aria-label="Difficulty" class="h-[89px] w-full appearance-none rounded-full bg-[#4a4a48] pl-[36px] text-[45px] font-light text-[#ededed]"><option>Difficulty</option></select><svg class="pointer-events-none absolute top-[34px] right-[35px] h-[22px] w-[32px]"><use href="#down"/></svg></div>
        </div>
        <div class="mt-[94px] flex items-center justify-between pr-[76px] pl-[46px]">
          <button type="button" class="flex h-[125px] w-[516px] items-center justify-center gap-[14px] rounded-full bg-[#ff4200] text-[44px] font-bold"><svg class="h-[64px] w-[64px]" viewBox="0 0 24 24" fill="#fff"><path d="M17 3H7c-1.100 0-2 .9-2 2v16l7-3 7 3V5c0-1.100-.9-2-2-2zm0 15-5-2.180L7 18V5h10v13z"/></svg>Save changes</button>
          <button type="reset" class="text-[45px] leading-[56px] text-[#ff4200] underline decoration-4 underline-offset-[8px]">Reset</button>
        </div>
      </form>

      <div class="absolute right-[127px] bottom-[112px] flex flex-col items-end gap-[64px]">
        <button aria-label="Layers" class="h-[150px] w-[150px] rounded-full bg-white"></button>
        <button aria-label="3D view" class="h-[150px] w-[150px] rounded-full bg-white"></button>
        <button aria-label="My location" class="h-[150px] w-[150px] rounded-full bg-white"></button>
        <button class="flex h-[143px] w-[612px] items-center justify-center gap-[36px] rounded-full bg-[#ff4200] text-[59px] font-bold"><svg class="h-[48px] w-[48px]" viewBox="0 0 48 48"><path d="M24 2V46M2 24H46" stroke="#fff" stroke-width="6" stroke-linecap="round"/></svg>Create Route</button>
      </div>
    </div>

    <section class="bg-black pt-[29px] pb-[20px]">
      <div class="-mr-[10px] flex justify-center"><div class="h-[19px] w-[167px] rounded-full bg-[#757575]"></div></div>
      <h2 class="mt-[81px] pl-[96px] text-[74px] leading-[88px] font-bold">Routes nearby</h2>
    </section>
    <nav class="flex h-[316px] justify-between bg-[#222220] pt-[97px] pr-[144px] pl-[113px] text-[51px] leading-[64px] font-medium">
      <a href="#">Home</a><a href="#" class="text-[#ff4200]">Maps</a><a href="#">Record</a><a href="#">Groups</a><a href="#">You</a>
    </nav>
    <div class="-mr-[10px] h-[29px] bg-linear-to-b from-[#a5a5a5] to-[#dedede] to-80%"></div>
  </section>
</div>
</body>
</html>
